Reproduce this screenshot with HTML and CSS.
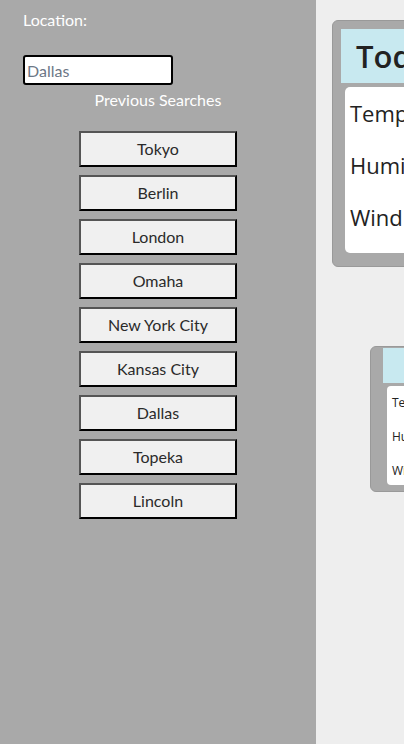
FILE: index.html
```html
<!DOCTYPE html>
<html>
<head>
<meta charset="utf-8">
<link rel="stylesheet" href="styles.css">
</head>
<body>
<aside class="sidebar">
  <label class="loc-label" for="loc">Location:</label>
  <input id="loc" class="loc-input" type="text" placeholder="Dallas">
  <h2 class="prev-title">Previous Searches</h2>
  <div class="history">
    <button class="city">Tokyo</button>
    <button class="city">Berlin</button>
    <button class="city">London</button>
    <button class="city">Omaha</button>
    <button class="city">New York City</button>
    <button class="city">Kansas City</button>
    <button class="city">Dallas</button>
    <button class="city">Topeka</button>
    <button class="city">Lincoln</button>
  </div>
</aside>
<main class="content">
  <section class="today">
    <div class="today-head">Today</div>
    <div class="today-body">
      <p class="stat">Temperature:</p>
      <p class="stat">Humidity:</p>
      <p class="stat">Wind Speed:</p>
    </div>
  </section>
  <section class="forecast">
    <div class="fc-head"></div>
    <div class="fc-body">
      <p class="fc-stat">Temp:</p>
      <p class="fc-stat">Humidity:</p>
      <p class="fc-stat">Wind:</p>
    </div>
  </section>
</main>
</body>
</html>
```

FILE: styles.css
```css
html, body {
  margin: 0;
  padding: 0;
}
body {
  display: flex;
  width: 404px;
  height: 744px;
  overflow: hidden;
  font-family: "Lato", "Open Sans", sans-serif;
  background: #eeeeee;
}
.sidebar {
  flex: none;
  width: 316px;
  height: 744px;
  background: #a9a9a9;
  display: flex;
  flex-direction: column;
  box-sizing: border-box;
  padding: 10px 0 0 0;
}
.loc-label {
  margin-left: 23px;
  color: #ffffff;
  font-size: 16px;
  line-height: 20px;
}
.loc-input {
  margin: 25px 0 0 23px;
  width: 150px;
  height: 30px;
  box-sizing: border-box;
  border: 2px solid #000;
  border-radius: 3px;
  padding: 0 2px;
  font-family: "Lato", "Open Sans", sans-serif;
  font-size: 16px;
  background: #fff;
}
.loc-input::placeholder {
  color: #6c7786;
}
.prev-title {
  margin: 4px 0 0 0;
  text-align: center;
  color: #ffffff;
  font-weight: normal;
  font-size: 16px;
  line-height: 22px;
}
.history {
  margin-top: 20px;
  display: flex;
  flex-direction: column;
  align-items: center;
  gap: 8px;
}
.city {
  width: 158px;
  height: 36px;
  box-sizing: border-box;
  background: #f0f0f0;
  border: 2px solid;
  border-color: #555555 #000000 #000000 #555555;
  font-family: "Lato", "Open Sans", sans-serif;
  font-size: 16px;
  color: #2a2a2a;
  padding: 0 0 1px 0;
}
.content {
  flex: none;
  width: 700px;
  padding: 20px 0 0 16px;
  box-sizing: border-box;
  display: flex;
  flex-direction: column;
  align-items: flex-start;
  font-family: "Open Sans", "Lato", sans-serif;
}
.today {
  width: 600px;
  box-sizing: border-box;
  background: #a9a9a9;
  border: 1px solid #999;
  border-radius: 6px;
  padding: 8px 0 13px 8px;
}
.today-head {
  background: #c8e9f0;
  height: 54px;
  box-sizing: border-box;
  padding-left: 15px;
  font-size: 31px;
  font-weight: 600;
  line-height: 54px;
  color: #222;
}
.today-body {
  margin: 4px 0 0 4px;
  background: #fff;
  border-radius: 5px;
  height: 166px;
  box-sizing: border-box;
  padding: 0 0 0 5px;
}
.stat {
  margin: 0;
  font-size: 22px;
  line-height: 52px;
  color: #222;
}
.forecast {
  margin: 79px 0 0 38px;
  width: 200px;
  box-sizing: border-box;
  background: #a9a9a9;
  border: 1px solid #999;
  border-radius: 6px;
  padding: 1px 0 6px 12px;
}
.fc-head {
  background: #c8e9f0;
  height: 35px;
}
.fc-body {
  margin: 3px 0 0 4px;
  background: #fff;
  border-radius: 4px;
  height: 99px;
  box-sizing: border-box;
  padding: 0 0 0 5px;
}
.fc-stat {
  margin: 0;
  font-size: 12px;
  line-height: 34px;
  color: #222;
}
```
